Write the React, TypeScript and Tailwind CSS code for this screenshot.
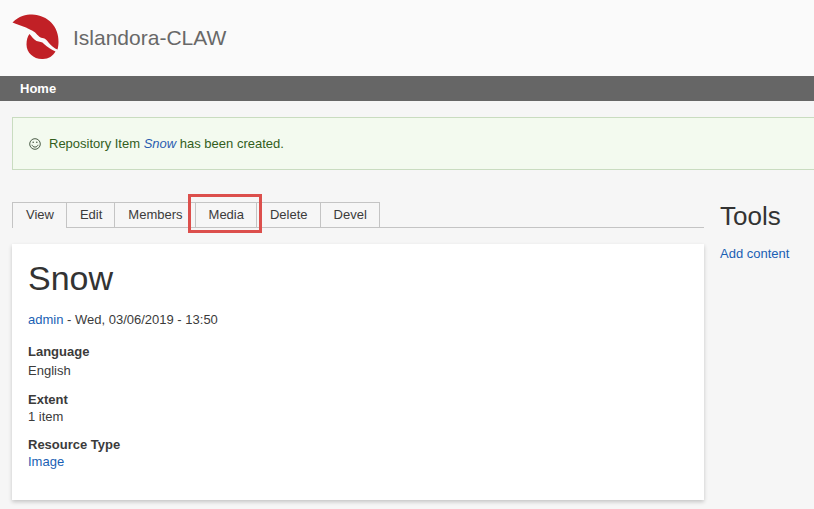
const tabs = ["View", "Edit", "Members", "Media", "Delete", "Devel"];

function Logo() {
  return (
    <svg className="h-12 w-12 shrink-0" viewBox="0 0 48 48" aria-hidden="true" fill="#c12026">
      <path d="M0.5 8.5C7 2 14 0.5 20 0.5C36 1 47 13 46.500 28C46.500 31 46 33.500 45.500 35.500C42.500 34.500 39 31.500 36.500 28.500C34.500 26 33.500 24.500 30.500 24C27 23.500 25 20 22.500 18C19 15.500 16.500 15 14 13.500C9.500 11.500 4.500 10.500 0.5 8.500Z" />
      <path d="M17.500 20C19.500 22.500 21.500 25 24.500 27C27.500 28 30 27.500 32 30C35.500 33.500 39.500 35.500 43.500 37.500C41 42 36.500 45 31 45C22 45.500 14.500 39 14.500 30.500C14.500 26 15.500 22.500 17.500 20Z" />
    </svg>
  );
}

function Smiley() {
  return (
    <svg className="h-3 w-3 shrink-0" viewBox="0 0 12 12" fill="none" stroke="#4b5c47" aria-hidden="true">
      <circle cx="6" cy="6" r="5.300" strokeWidth="1" />
      <path d="M3 6.800C3.600 9.800 8.400 9.800 9 6.800" strokeWidth="1" />
      <circle cx="4.200" cy="4.300" r="0.8" fill="#4b5c47" stroke="none" />
      <circle cx="7.800" cy="4.300" r="0.8" fill="#4b5c47" stroke="none" />
    </svg>
  );
}

export default function App() {
  return (
    <div className="min-h-screen overflow-x-hidden bg-[#f6f6f6] font-['Liberation_Sans',Arial,sans-serif] text-[13px] leading-4 text-[#3b3b3b]">
      <header className="flex h-[76px] items-center gap-[13px] bg-[#fafafa] pl-3">
        <Logo />
        <a href="#" className="text-[21px] leading-7 text-[#686868]">Islandora-CLAW</a>
      </header>
      <nav aria-label="Main" className="flex h-[25px] items-center bg-[#666] px-5">
        <a href="#" className="font-bold text-white">Home</a>
      </nav>

      <div role="status" className="mt-4 ml-3 flex items-center gap-2 border-y border-l border-[#c9dcc0] bg-[#f3faef] pt-[18px] pb-[17px] pl-4">
        <Smiley />
        <p className="text-[#325e1c]">
          Repository Item <a href="#" className="text-[#2a5db0] italic">Snow</a> has been created.
        </p>
      </div>

      <div className="mt-8 flex gap-4 pl-3">
        <main className="min-w-0 flex-1">
          <nav aria-label="Tabs" className="flex">
            {tabs.map((tab) => (
              <a
                key={tab}
                href="#"
                aria-current={tab === "View" ? "page" : undefined}
                className={`relative border-t border-l border-[#c4c4c4] py-1 pr-3 pl-[13px] ${
                  tab === "View" ? "" : "border-b"
                } ${tab === "Devel" ? "border-r" : ""}`}
              >
                {tab}
                {tab === "Media" && (
                  <span className="absolute -top-[9px] -right-[6px] -bottom-[6px] -left-2 z-10 border-3 border-[#dc4f4c]" />
                )}
              </a>
            ))}
            <span className="flex-1 border-b border-[#c4c4c4]" />
          </nav>

          <article className="mt-4 bg-white px-4 pt-[14px] pb-[30px] shadow-[0_2px_4px_rgba(0,0,0,0.2)]">
            <h1 className="text-[34px] leading-10 text-[#333]">Snow</h1>
            <p className="mt-[14px]">
              <a href="#" className="text-[#1a5fb4]">admin</a> - Wed, 03/06/2019 - 13:50
            </p>
            <dl>
              <dt className="mt-4 font-bold">Language</dt>
              <dd className="mt-[3px]">English</dd>
              <dt className="mt-[13px] font-bold">Extent</dt>
              <dd className="mt-px">1 item</dd>
              <dt className="mt-3 font-bold">Resource Type</dt>
              <dd className="mt-px"><a href="#" className="text-[#1a5fb4]">Image</a></dd>
            </dl>
          </article>
        </main>

        <aside className="w-[94px] shrink-0">
          <h2 className="text-[26px] leading-7 text-[#333]">Tools</h2>
          <a href="#" className="mt-4 block text-[#1a5fb4]">Add content</a>
        </aside>
      </div>
    </div>
  );
}
